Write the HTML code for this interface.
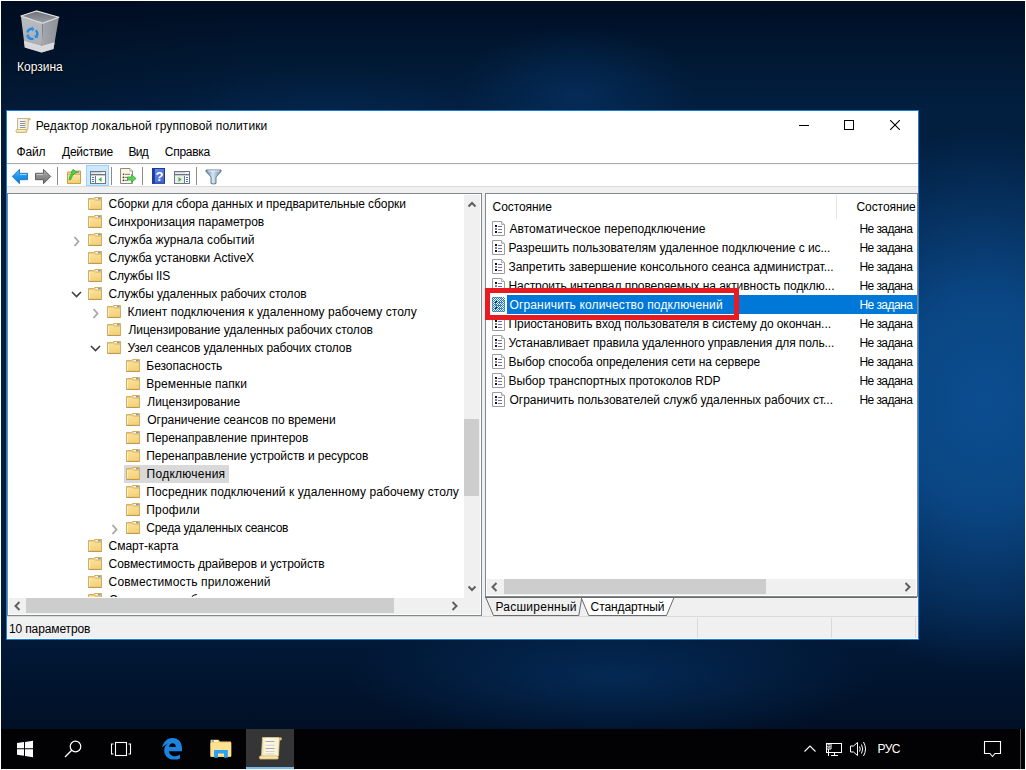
<!DOCTYPE html><html><head><meta charset="utf-8"><style>
html,body{margin:0;padding:0;}
body{width:1026px;height:770px;position:relative;overflow:hidden;background:#fff;font-family:"Liberation Sans", sans-serif;}
.t{position:absolute;white-space:nowrap;line-height:16px;font-family:"Liberation Sans", sans-serif;}
svg{position:absolute;}
</style></head><body>
<div style="position:absolute;left:1px;top:1px;width:1024px;height:768px;background:#011330;background:radial-gradient(ellipse 260px 200px at 0px 20px, rgba(0,10,28,0.4), rgba(0,10,28,0) 100%), radial-gradient(ellipse 120px 70px at 575px 95px, rgba(6,52,105,0.6), rgba(6,52,105,0) 100%), radial-gradient(ellipse 160px 45px at 330px 110px, rgba(5,45,92,0.4), rgba(5,45,92,0) 100%), radial-gradient(ellipse 260px 70px at 610px 675px, rgba(5,48,96,0.75), rgba(5,48,96,0) 100%), radial-gradient(ellipse 230px 270px at 985px 400px, rgba(12,80,148,0.95) 0%, rgba(12,80,148,0.8) 40%, rgba(12,80,148,0) 100%), linear-gradient(180deg,#000d24 0%, #011832 7%, #021f40 14%, #021d3e 40%, #021d3f 78%, #011530 88%, #010c1e 100%);"></div>
<svg style="left:18px;top:8px" width="44" height="48" viewBox="0 0 44 48">
<defs>
<linearGradient id="binl" x1="0" y1="0" x2="0" y2="1"><stop offset="0" stop-color="#b9bcc1"/><stop offset="1" stop-color="#a8acb1"/></linearGradient>
<linearGradient id="binr" x1="0" y1="0" x2="1" y2="0"><stop offset="0" stop-color="#a4a8ae"/><stop offset="1" stop-color="#8e9298"/></linearGradient>
<linearGradient id="bint" x1="0" y1="0" x2="0" y2="1"><stop offset="0" stop-color="#6e7278"/><stop offset="1" stop-color="#9a9ea4"/></linearGradient>
</defs>
<path d="M2.9 7.9 L24.6 15.3 L23.6 44.4 L6.8 39.5 Z" fill="url(#binl)"/>
<path d="M24.6 15.3 L40.9 9.3 L35.5 40.9 L23.6 44.4 Z" fill="url(#binr)"/>
<path d="M5.9 33.5 L23.8 38.5 L36.5 34.8 L35.5 40.9 L23.6 44.4 L6.8 39.5 Z" fill="#d6d8db"/>
<path d="M5.9 33.5 L23.8 38.5 L36.5 34.8" fill="none" stroke="#e8e9ea" stroke-width="0.8"/>
<path d="M2.9 7.9 L18.2 2.9 L40.9 9.3 L24.6 15.3 Z" fill="url(#bint)" stroke="#e4e6e8" stroke-width="1.1" stroke-linejoin="round"/>
<path d="M9.37 24.51 A5.0 5.0 0 0 1 14.20 20.80 M17.74 22.26 A5.0 5.0 0 0 1 18.53 28.30 M15.49 30.63 A5.0 5.0 0 0 1 9.87 28.30 " fill="none" stroke="#1f8ae8" stroke-width="2.4"/><path d="M14.20 18.20 L16.31 21.27 L14.20 23.40 Z" fill="#1f8ae8"/><path d="M20.78 29.60 L17.07 29.90 L16.28 27.00 Z" fill="#1f8ae8"/><path d="M7.62 29.60 L9.22 26.24 L12.12 27.00 Z" fill="#1f8ae8"/>
</svg>
<div class="t" style="left:17px;top:59px;color:#fff;font-size:12px;text-shadow:0 1px 2px #000,0 0 1px #000;">Корзина</div>
<div style="position:absolute;left:6px;top:110px;width:913px;height:530px;background:#ffffff;box-sizing:border-box;border:1px solid #1a7fd4;"></div>
<svg style="left:14px;top:116px" width="18" height="18" viewBox="0 0 18 18">
<defs><linearGradient id="scr" x1="0" x2="1"><stop offset="0" stop-color="#f6f1dc"/><stop offset="0.5" stop-color="#fdf7dc"/><stop offset="1" stop-color="#f3e2a8"/></linearGradient></defs>
<path d="M3.5 2.5 H14.5 L13.8 13.5 H3.5 Z" fill="url(#scr)" stroke="#bcb8a6" stroke-width="1"/>
<path d="M6 5.5 H11.5 M6 7.5 H11.5 M6 9.5 H11.5 M6 11.5 H11.5" stroke="#8a90b8" stroke-width="1"/>
<circle cx="15.2" cy="3.3" r="1.3" fill="#d8b65c"/>
<path d="M2.5 13.5 H12.5 Q13.3 15 12.5 16.5 H2.5 Q1.2 15 2.5 13.5 Z" fill="#f3dc98" stroke="#c9b478" stroke-width="0.9"/>
<path d="M3 14.6 H11" stroke="#fff6d8" stroke-width="0.8"/>
</svg>
<div class="t" style="left:35.7px;top:118px;color:#000;font-size:12px;letter-spacing:0.103px;">Редактор локальной групповой политики</div>
<div style="position:absolute;left:799px;top:125px;width:10px;height:1px;background:#000;"></div>
<div style="position:absolute;left:844px;top:120px;width:10px;height:10px;background:transparent;box-sizing:border-box;border:1px solid #000;"></div>
<svg style="left:890px;top:120px" width="10" height="10" viewBox="0 0 10 10"><path d="M0 0 L10 10 M10 0 L0 10" stroke="#000" stroke-width="1.1"/></svg>
<div class="t" style="left:16.5px;top:144px;color:#000;font-size:12px;letter-spacing:-0.167px;">Файл</div>
<div class="t" style="left:62.0px;top:144px;color:#000;font-size:12px;letter-spacing:-0.214px;">Действие</div>
<div class="t" style="left:128.5px;top:144px;color:#000;font-size:12px;letter-spacing:-0.75px;">Вид</div>
<div class="t" style="left:164.8px;top:144px;color:#000;font-size:12px;letter-spacing:-0.267px;">Справка</div>
<div style="position:absolute;left:7px;top:163px;width:911px;height:1px;background:#a9a9a9;"></div>
<div style="position:absolute;left:7px;top:164px;width:911px;height:1px;background:#f6f8fb;"></div>
<div style="position:absolute;left:7px;top:186px;width:911px;height:1px;background:#dadada;"></div>
<div style="position:absolute;left:7px;top:187px;width:911px;height:6px;background:#f0f0f0;"></div>
<div style="position:absolute;left:7px;top:193px;width:911px;height:445px;background:#f0f0f0;"></div>
<div style="position:absolute;left:86px;top:165px;width:23px;height:21px;background:#cce8ff;box-sizing:border-box;border:1px solid #99d1ff;"></div>
<svg style="left:0px;top:160px" width="240" height="30" viewBox="0 0 240 30">
<defs>
<linearGradient id="gb" x1="0" y1="0" x2="0" y2="1"><stop offset="0" stop-color="#5cc0f8"/><stop offset="0.5" stop-color="#1c96ec"/><stop offset="1" stop-color="#0a78d6"/></linearGradient>
<linearGradient id="gg" x1="0" y1="0" x2="0" y2="1"><stop offset="0" stop-color="#b4b4b4"/><stop offset="0.5" stop-color="#8c8c8c"/><stop offset="1" stop-color="#747474"/></linearGradient>
<linearGradient id="gf" x1="0" y1="0" x2="0" y2="1"><stop offset="0" stop-color="#fbe7a6"/><stop offset="1" stop-color="#f2cf6e"/></linearGradient>
<linearGradient id="gh" x1="0" y1="0" x2="1" y2="1"><stop offset="0" stop-color="#6d8fe8"/><stop offset="1" stop-color="#3c5fcc"/></linearGradient>
<linearGradient id="gfl" x1="0" y1="0" x2="1" y2="0"><stop offset="0" stop-color="#5a7894"/><stop offset="0.45" stop-color="#d8e8f4"/><stop offset="1" stop-color="#6c8aa6"/></linearGradient>
</defs>
<!-- back arrow -->
<path d="M12.3 16.5 L19.5 9.3 V13.3 H27.5 V19.7 H19.5 V23.7 Z" fill="url(#gb)" stroke="#2d7cc8" stroke-width="1" stroke-linejoin="round"/>
<path d="M20 14.5 H26.5" stroke="#8fd4ff" stroke-width="1"/>
<!-- forward arrow -->
<path d="M50.7 16.5 L43.5 9.3 V13.3 H35.5 V19.7 H43.5 V23.7 Z" fill="url(#gg)" stroke="#5e5e5e" stroke-width="1" stroke-linejoin="round"/>
<path d="M36.5 14.5 H43" stroke="#c8c8c8" stroke-width="1"/>
<!-- separators -->
<path d="M57.5 7 V25 M111.5 7 V25 M142.5 7 V25 M196.5 7 V25" stroke="#8c8c8c" stroke-width="1"/>
<!-- up folder -->
<path d="M67.5 12 H72 L73 11 H80.5 V23.5 H67.5 Z" fill="#f3d27a" stroke="#c8a048" stroke-width="1"/>
<path d="M68 14.5 H80" stroke="#d8b460" stroke-width="1"/>
<rect x="68" y="15" width="12" height="8" fill="url(#gf)"/>
<rect x="76" y="11.5" width="3" height="1.3" fill="#4a90e0"/>
<path d="M69 19.5 Q70 14 72.5 13 L71 12.5 L73.3 9.2 L76.5 12.8 L74.8 13 Q72.5 15 70.5 19.8 Z" fill="#4cd84c" stroke="#2aa02a" stroke-width="0.8"/>
<!-- show/hide tree icon -->
<rect x="90.5" y="11.5" width="15" height="12" fill="#f4f4f4" stroke="#6e7682" stroke-width="1"/>
<path d="M91 12.8 H101.5" stroke="#c8c8c8" stroke-width="1"/>
<rect x="102" y="12.2" width="1" height="1" fill="#fff"/><rect x="104" y="12.2" width="1" height="1" fill="#fff"/>
<path d="M91 14.5 H105" stroke="#6e7682" stroke-width="1"/>
<path d="M91 15.5 H105" stroke="#c8ccd2" stroke-width="1"/>
<path d="M95.5 16 V23" stroke="#6e7682" stroke-width="1"/>
<rect x="96" y="16" width="9" height="7" fill="#ffffff"/>
<path d="M92 17.5 H94 M92 19.5 H94 M92 21.5 H94" stroke="#3f7fd0" stroke-width="1.2"/>
<path d="M98.5 19.5 L101.5 17 V22 Z" fill="#35b535"/>
<!-- export list -->
<path d="M120.5 8.5 H130 L132.5 11 V23.5 H120.5 Z" fill="#fdf6dc" stroke="#8a8a8a" stroke-width="1"/>
<path d="M130 8.5 V11 H132.5" fill="#fff" stroke="#9a9a9a" stroke-width="0.8"/>
<circle cx="123.5" cy="14.3" r="0.8" fill="#222"/><circle cx="123.5" cy="17.4" r="0.8" fill="#222"/><circle cx="123.5" cy="20.4" r="0.8" fill="#222"/>
<path d="M125 14.3 H130 M125 17.4 H128 M125 20.4 H128" stroke="#7a70b0" stroke-width="1"/>
<path d="M127.5 17 H131.5 V14.5 L136 18.5 L131.5 22.5 V20 H127.5 Z" fill="#5cd05c" stroke="#34a834" stroke-width="0.8"/>
<!-- help book -->
<rect x="152" y="8" width="13" height="15.7" fill="url(#gh)"/>
<rect x="152" y="8" width="3" height="15.7" fill="#2040a8"/>
<rect x="152.5" y="8.5" width="12" height="14.7" fill="none" stroke="#1c3a9a" stroke-width="1"/>
<text x="159.5" y="21" font-family="Liberation Sans" font-size="13" font-weight="bold" fill="#fff" text-anchor="middle">?</text>
<!-- action pane icon -->
<rect x="174.5" y="11.5" width="15" height="12" fill="#f4f4f4" stroke="#6e7682" stroke-width="1"/>
<path d="M175 12.8 H185.5" stroke="#c8c8c8" stroke-width="1"/>
<rect x="186" y="12.2" width="1" height="1" fill="#fff"/><rect x="188" y="12.2" width="1" height="1" fill="#fff"/>
<path d="M175 14.5 H189" stroke="#6e7682" stroke-width="1"/>
<path d="M175 15.5 H189" stroke="#c8ccd2" stroke-width="1"/>
<path d="M184.5 16 V23" stroke="#6e7682" stroke-width="1"/>
<rect x="175" y="16" width="9" height="7" fill="#eeeeee"/>
<rect x="185" y="16" width="4" height="7" fill="#ffffff"/>
<path d="M186 17.5 H188 M186 19.5 H188 M186 21.5 H188" stroke="#3f7fd0" stroke-width="1.2"/>
<path d="M178.5 17 L181.5 19.5 L178.5 22 Z" fill="#35b535"/>
<!-- filter -->
<path d="M206 10 H221 V11.5 L216 17 V23.5 Q213.5 24.5 211 23.5 V17 L206 11.5 Z" fill="url(#gfl)" stroke="#58748e" stroke-width="0.9" stroke-linejoin="round"/>
<path d="M207.5 11 H219.5" stroke="#e8f2fa" stroke-width="1"/>
</svg>
<svg width="0" height="0" style="position:absolute;left:0;top:0"><defs>
<symbol id="fold" viewBox="0 0 14 13">
<linearGradient id="fg" x1="0" y1="0" x2="0.3" y2="1"><stop offset="0" stop-color="#fbe49e"/><stop offset="1" stop-color="#f4d27a"/></linearGradient>
<path d="M0.5 1.5 H5.5 L6.5 0.5 H13.5 V12.5 H0.5 Z" fill="#eccb7a" stroke="#d2ad64" stroke-width="1"/>
<rect x="7.5" y="1.2" width="2.5" height="1" fill="#ffffff"/><rect x="10" y="1.2" width="2.5" height="1" fill="#4a94e4"/>
<path d="M1 2 H6.3 L7.3 3.2 H13 V12 H1 Z" fill="url(#fg)"/>
<path d="M1 2.2 H6.3 L7.3 3.4 H13" stroke="#e2bd6c" stroke-width="0.8" fill="none"/>
<path d="M0.5 12.4 H13.5" stroke="#bf9850" stroke-width="1"/>
<path d="M1.5 3 V11.5" stroke="#fdf2c8" stroke-width="0.8"/>
</symbol>
<symbol id="doc" viewBox="0 0 13 15">
<path d="M0.5 0.5 H9.5 L12.5 3.5 V14.5 H0.5 Z" fill="#fff" stroke="#9c9c9c" stroke-width="1"/>
<path d="M9.5 0.5 V3.5 H12.5" fill="#e8e8e8" stroke="#b0b0b0" stroke-width="1"/>
<rect x="3" y="4" width="2" height="2" fill="#111"/>
<rect x="3" y="7" width="2" height="2" fill="#7c78b0"/>
<rect x="3" y="10" width="2" height="2" fill="#111"/>
<path d="M6 5.5 H10 M6 8.5 H10 M6 11.5 H10" stroke="#7670a8" stroke-width="1"/>
</symbol>
</defs></svg>
<div style="position:absolute;left:7px;top:193px;width:475px;height:423px;background:#ffffff;box-sizing:border-box;border:1px solid #828790;"></div>
<div style="position:absolute;left:8px;top:194px;width:456px;height:403px;overflow:hidden"><div style="position:absolute;left:-8px;top:-194px;width:1026px;height:770px"><svg style="left:88px;top:197px" width="14" height="13"><use href="#fold"/></svg>
<div class="t" style="left:108.6px;top:196px;color:#000;font-size:12px;letter-spacing:-0.064px;">Сборки для сбора данных и предварительные сборки</div>
<svg style="left:88px;top:215px" width="14" height="13"><use href="#fold"/></svg>
<div class="t" style="left:108.6px;top:214px;color:#000;font-size:12px;letter-spacing:-0.039px;">Синхронизация параметров</div>
<svg style="left:73px;top:236px" width="8" height="11" viewBox="0 0 8 11"><path d="M1.5 1 L5.5 5.5 L1.5 10" fill="none" stroke="#a6a6a6" stroke-width="1.8"/></svg>
<svg style="left:88px;top:233px" width="14" height="13"><use href="#fold"/></svg>
<div class="t" style="left:108.6px;top:232px;color:#000;font-size:12px;letter-spacing:0.052px;">Служба журнала событий</div>
<svg style="left:88px;top:251px" width="14" height="13"><use href="#fold"/></svg>
<div class="t" style="left:108.6px;top:250px;color:#000;font-size:12px;letter-spacing:-0.026px;">Служба установки ActiveX</div>
<svg style="left:88px;top:269px" width="14" height="13"><use href="#fold"/></svg>
<div class="t" style="left:108.6px;top:268px;color:#000;font-size:12px;letter-spacing:-0.2px;">Службы IIS</div>
<svg style="left:71px;top:290px" width="11" height="9" viewBox="0 0 11 9"><path d="M1 2 L5.5 6.5 L10 2" fill="none" stroke="#404040" stroke-width="1.6"/></svg>
<svg style="left:88px;top:287px" width="14" height="13"><use href="#fold"/></svg>
<div class="t" style="left:108.6px;top:286px;color:#000;font-size:12px;letter-spacing:-0.06px;">Службы удаленных рабочих столов</div>
<svg style="left:92px;top:308px" width="8" height="11" viewBox="0 0 8 11"><path d="M1.5 1 L5.5 5.5 L1.5 10" fill="none" stroke="#a6a6a6" stroke-width="1.8"/></svg>
<svg style="left:107px;top:305px" width="14" height="13"><use href="#fold"/></svg>
<div class="t" style="left:127.5px;top:304px;color:#000;font-size:12px;letter-spacing:0.044px;">Клиент подключения к удаленному рабочему столу</div>
<svg style="left:107px;top:323px" width="14" height="13"><use href="#fold"/></svg>
<div class="t" style="left:128.5px;top:322px;color:#000;font-size:12px;letter-spacing:-0.082px;">Лицензирование удаленных рабочих столов</div>
<svg style="left:90px;top:344px" width="11" height="9" viewBox="0 0 11 9"><path d="M1 2 L5.5 6.5 L10 2" fill="none" stroke="#404040" stroke-width="1.6"/></svg>
<svg style="left:107px;top:341px" width="14" height="13"><use href="#fold"/></svg>
<div class="t" style="left:127.5px;top:340px;color:#000;font-size:12px;letter-spacing:-0.117px;">Узел сеансов удаленных рабочих столов</div>
<svg style="left:126px;top:359px" width="14" height="13"><use href="#fold"/></svg>
<div class="t" style="left:146.3px;top:358px;color:#000;font-size:12px;letter-spacing:-0.045px;">Безопасность</div>
<svg style="left:126px;top:377px" width="14" height="13"><use href="#fold"/></svg>
<div class="t" style="left:146.3px;top:376px;color:#000;font-size:12px;letter-spacing:0.057px;">Временные папки</div>
<svg style="left:126px;top:395px" width="14" height="13"><use href="#fold"/></svg>
<div class="t" style="left:147.3px;top:394px;color:#000;font-size:12px;letter-spacing:-0.015px;">Лицензирование</div>
<svg style="left:126px;top:413px" width="14" height="13"><use href="#fold"/></svg>
<div class="t" style="left:147.3px;top:412px;color:#000;font-size:12px;letter-spacing:-0.045px;">Ограничение сеансов по времени</div>
<svg style="left:126px;top:431px" width="14" height="13"><use href="#fold"/></svg>
<div class="t" style="left:146.3px;top:430px;color:#000;font-size:12px;letter-spacing:-0.046px;">Перенаправление принтеров</div>
<svg style="left:126px;top:449px" width="14" height="13"><use href="#fold"/></svg>
<div class="t" style="left:146.3px;top:448px;color:#000;font-size:12px;letter-spacing:-0.074px;">Перенаправление устройств и ресурсов</div>
<div style="position:absolute;left:124px;top:465px;width:105px;height:18px;background:#d9d9d9;"></div>
<svg style="left:126px;top:467px" width="14" height="13"><use href="#fold"/></svg>
<div class="t" style="left:146.6px;top:466px;color:#000;font-size:12px;letter-spacing:0.26px;">Подключения</div>
<svg style="left:126px;top:485px" width="14" height="13"><use href="#fold"/></svg>
<div class="t" style="left:146.3px;top:484px;color:#000;font-size:12px;letter-spacing:0.098px;">Посредник подключений к удаленному рабочему столу</div>
<svg style="left:126px;top:503px" width="14" height="13"><use href="#fold"/></svg>
<div class="t" style="left:146.3px;top:502px;color:#000;font-size:12px;letter-spacing:0.2px;">Профили</div>
<svg style="left:111px;top:524px" width="8" height="11" viewBox="0 0 8 11"><path d="M1.5 1 L5.5 5.5 L1.5 10" fill="none" stroke="#a6a6a6" stroke-width="1.8"/></svg>
<svg style="left:126px;top:521px" width="14" height="13"><use href="#fold"/></svg>
<div class="t" style="left:146.3px;top:520px;color:#000;font-size:12px;letter-spacing:-0.268px;">Среда удаленных сеансов</div>
<svg style="left:88px;top:539px" width="14" height="13"><use href="#fold"/></svg>
<div class="t" style="left:108.6px;top:538px;color:#000;font-size:12px;letter-spacing:-0.02px;">Смарт-карта</div>
<svg style="left:88px;top:557px" width="14" height="13"><use href="#fold"/></svg>
<div class="t" style="left:108.6px;top:556px;color:#000;font-size:12px;letter-spacing:-0.088px;">Совместимость драйверов и устройств</div>
<svg style="left:88px;top:575px" width="14" height="13"><use href="#fold"/></svg>
<div class="t" style="left:108.6px;top:574px;color:#000;font-size:12px;letter-spacing:0.13px;">Совместимость приложений</div>
<svg style="left:88px;top:593px" width="14" height="13"><use href="#fold"/></svg>
<div class="t" style="left:109px;top:592px;color:#000;font-size:12px;">Содержимое облака</div></div></div>
<div style="position:absolute;left:464px;top:195px;width:16px;height:403px;background:#f0f0f0;"></div>
<div style="position:absolute;left:464px;top:419px;width:15px;height:77px;background:#cdcdcd;"></div>
<svg style="left:467px;top:200px" width="10" height="8" viewBox="0 0 10 8"><path d="M1.5 6.5 L5 3 L8.5 6.5" fill="none" stroke="#606060" stroke-width="2"/></svg>
<svg style="left:467px;top:585px" width="10" height="8" viewBox="0 0 10 8"><path d="M1.5 1.5 L5 5 L8.5 1.5" fill="none" stroke="#606060" stroke-width="2"/></svg>
<div style="position:absolute;left:9px;top:598px;width:471px;height:16px;background:#f0f0f0;"></div>
<div style="position:absolute;left:26px;top:598px;width:368px;height:15px;background:#cdcdcd;"></div>
<svg style="left:13px;top:601px" width="8" height="10" viewBox="0 0 8 10"><path d="M6.5 1 L2.5 5 L6.5 9" fill="none" stroke="#606060" stroke-width="2"/></svg>
<svg style="left:451px;top:601px" width="8" height="10" viewBox="0 0 8 10"><path d="M1.5 1 L5.5 5 L1.5 9" fill="none" stroke="#606060" stroke-width="2"/></svg>
<div style="position:absolute;left:485px;top:193px;width:433px;height:404px;background:#ffffff;box-sizing:border-box;border:1px solid #828790;"></div>
<div class="t" style="left:492.6px;top:199px;color:#000;font-size:12px;letter-spacing:-0.075px;">Состояние</div>
<div style="position:absolute;left:836px;top:195px;width:1px;height:24px;background:#e5e5e5;"></div>
<div style="position:absolute;left:486px;top:194px;width:431px;height:385px;overflow:hidden"><div style="position:absolute;left:-486px;top:-194px;width:1026px;height:770px"><div class="t" style="left:856.5px;top:199px;color:#000;font-size:12px;letter-spacing:-0.075px;">Состояние</div></div></div>
<svg style="left:492px;top:221px" width="13" height="15"><use href="#doc"/></svg>
<div class="t" style="left:509.5px;top:221px;color:#000;font-size:12px;letter-spacing:0.048px;">Автоматическое переподключение</div>
<div class="t" style="left:859.4px;top:221px;color:#000;font-size:12px;letter-spacing:-0.55px;">Не задана</div>
<svg style="left:492px;top:240px" width="13" height="15"><use href="#doc"/></svg>
<div class="t" style="left:508.5px;top:240px;color:#000;font-size:12px;letter-spacing:-0.044px;">Разрешить пользователям удаленное подключение с ис...</div>
<div class="t" style="left:859.4px;top:240px;color:#000;font-size:12px;letter-spacing:-0.55px;">Не задана</div>
<svg style="left:492px;top:259px" width="13" height="15"><use href="#doc"/></svg>
<div class="t" style="left:508.5px;top:259px;color:#000;font-size:12px;letter-spacing:-0.028px;">Запретить завершение консольного сеанса администрат...</div>
<div class="t" style="left:859.4px;top:259px;color:#000;font-size:12px;letter-spacing:-0.55px;">Не задана</div>
<svg style="left:492px;top:278px" width="13" height="15"><use href="#doc"/></svg>
<div class="t" style="left:508.5px;top:278px;color:#000;font-size:12px;letter-spacing:-0.055px;">Настроить интервал проверяемых на активность подклю...</div>
<div class="t" style="left:859.4px;top:278px;color:#000;font-size:12px;letter-spacing:-0.55px;">Не задана</div>
<div style="position:absolute;left:507px;top:295px;width:410px;height:19px;background:#0078d7;"></div>
<svg style="left:492px;top:297px" width="13" height="15"><use href="#doc"/></svg>
<div style="position:absolute;left:492px;top:297px;width:13px;height:15px;background:repeating-conic-gradient(#0078d7 0 25%, transparent 0 50%) 0 0/2px 2px;opacity:0.9"></div>
<div class="t" style="left:509.5px;top:297px;color:#fff;font-size:12px;letter-spacing:0.141px;">Ограничить количество подключений</div>
<div class="t" style="left:859.4px;top:297px;color:#fff;font-size:12px;letter-spacing:-0.55px;">Не задана</div>
<svg style="left:492px;top:316px" width="13" height="15"><use href="#doc"/></svg>
<div class="t" style="left:508.5px;top:316px;color:#000;font-size:12px;letter-spacing:-0.076px;">Приостановить вход пользователя в систему до окончан...</div>
<div class="t" style="left:859.4px;top:316px;color:#000;font-size:12px;letter-spacing:-0.55px;">Не задана</div>
<svg style="left:492px;top:335px" width="13" height="15"><use href="#doc"/></svg>
<div class="t" style="left:508.5px;top:335px;color:#000;font-size:12px;letter-spacing:-0.109px;">Устанавливает правила удаленного управления для поль...</div>
<div class="t" style="left:859.4px;top:335px;color:#000;font-size:12px;letter-spacing:-0.55px;">Не задана</div>
<svg style="left:492px;top:354px" width="13" height="15"><use href="#doc"/></svg>
<div class="t" style="left:508.5px;top:354px;color:#000;font-size:12px;letter-spacing:-0.088px;">Выбор способа определения сети на сервере</div>
<div class="t" style="left:859.4px;top:354px;color:#000;font-size:12px;letter-spacing:-0.55px;">Не задана</div>
<svg style="left:492px;top:373px" width="13" height="15"><use href="#doc"/></svg>
<div class="t" style="left:508.5px;top:373px;color:#000;font-size:12px;letter-spacing:-0.047px;">Выбор транспортных протоколов RDP</div>
<div class="t" style="left:859.4px;top:373px;color:#000;font-size:12px;letter-spacing:-0.55px;">Не задана</div>
<svg style="left:492px;top:392px" width="13" height="15"><use href="#doc"/></svg>
<div class="t" style="left:509.5px;top:392px;color:#000;font-size:12px;letter-spacing:-0.036px;">Ограничить пользователей служб удаленных рабочих ст...</div>
<div class="t" style="left:859.4px;top:392px;color:#000;font-size:12px;letter-spacing:-0.55px;">Не задана</div>
<div style="position:absolute;left:485px;top:288px;width:254px;height:32px;background:transparent;box-sizing:border-box;border:5px solid #e81b23;"></div>
<div style="position:absolute;left:487px;top:579px;width:429px;height:16px;background:#f0f0f0;"></div>
<div style="position:absolute;left:504px;top:579px;width:262px;height:15px;background:#cdcdcd;"></div>
<svg style="left:490px;top:582px" width="8" height="10" viewBox="0 0 8 10"><path d="M6.5 1 L2.5 5 L6.5 9" fill="none" stroke="#606060" stroke-width="2"/></svg>
<svg style="left:904px;top:582px" width="8" height="10" viewBox="0 0 8 10"><path d="M1.5 1 L5.5 5 L1.5 9" fill="none" stroke="#606060" stroke-width="2"/></svg>
<svg style="left:485px;top:597px" width="432" height="20" viewBox="0 0 432 20"><path d="M0.8 0.5 L8.5 18.5 H93.8 L96.8 0.5" fill="#f0f0f0" stroke="#6a6a6a" stroke-width="1"/><path d="M96.1 0.5 L103.7 18.5 H181.5 L189 0.5" fill="#ffffff" stroke="#6a6a6a" stroke-width="1"/><path d="M0 0.5 H432" stroke="#6a6a6a" stroke-width="1"/></svg>
<div class="t" style="left:495.4px;top:599px;color:#000;font-size:12px;letter-spacing:0.26px;">Расширенный</div>
<div class="t" style="left:590.6px;top:599px;color:#000;font-size:12px;letter-spacing:-0.1px;">Стандартный</div>
<div style="position:absolute;left:7px;top:616px;width:911px;height:1px;background:#dadada;"></div>
<div class="t" style="left:8.9px;top:621px;color:#000;font-size:12px;letter-spacing:-0.117px;">10 параметров</div>
<div style="position:absolute;left:697px;top:618px;width:1px;height:20px;background:#d9d9d9;"></div>
<div style="position:absolute;left:831px;top:618px;width:1px;height:20px;background:#d9d9d9;"></div>
<div style="position:absolute;left:915px;top:618px;width:1px;height:20px;background:#d9d9d9;"></div>
<div style="position:absolute;left:1px;top:729px;width:1024px;height:40px;background:#020204;"></div>
<div style="position:absolute;left:246px;top:729px;width:48px;height:40px;background:#353535;"></div>
<div style="position:absolute;left:246px;top:767px;width:48px;height:2px;background:#76b9ed;"></div>
<svg style="left:0px;top:729px" width="1026" height="40" viewBox="0 0 1026 40">
<!-- windows logo -->
<path d="M17 14 L24 13 V19.3 H17 Z M25 12.9 L33 11.7 V19.3 H25 Z M17 20.3 H24 V26.8 L17 25.8 Z M25 20.3 H33 V28.2 L25 27 Z" fill="#ffffff"/>
<!-- search -->
<circle cx="75.5" cy="17.5" r="5.3" fill="none" stroke="#fff" stroke-width="1.2"/>
<path d="M71.7 21.3 L65 28" stroke="#fff" stroke-width="1.3"/>
<!-- task view -->
<rect x="115.5" y="13.5" width="11" height="13" fill="none" stroke="#fff" stroke-width="1.1"/>
<path d="M113.5 15 H111.5 V25 H113.5 M128.5 15 H130.5 V25 H128.5" fill="none" stroke="#fff" stroke-width="1.1"/>
<!-- edge -->
<path fill-rule="evenodd" d="M162 18.6 C163.6 12.8 167 9.2 172.2 9 C178.2 8.8 182 13 182 19.5 V22.2 H169 C169.3 25.4 172 27.2 175 27.2 C177 27.2 178.7 26.6 180 25.5 V29.4 C178.5 30.2 176.5 30.6 174 30.6 C168 30.6 164.2 26.5 164.2 21.5 C164.2 17.8 166.3 15 169.1 14.2 C166.6 14.9 163.8 16.4 162 18.6 Z M169 18 H175.8 C175.8 15.8 174.5 14.3 172.5 14.3 C170.8 14.3 169.4 15.8 169 18 Z" fill="#1a84e0"/>
<!-- explorer -->
<path d="M210.5 11.5 Q210.5 10.7 211.3 10.7 H218.5 L220 12.5 H230.5 Q231.2 12.5 231.2 13.3 V27 Q231.2 27.8 230.5 27.8 H211.3 Q210.5 27.8 210.5 27 Z" fill="#f4cf6a"/>
<rect x="210.5" y="13.8" width="20.7" height="14" rx="0.8" fill="#fde293"/>
<rect x="211.8" y="11.4" width="2.2" height="1.3" fill="#3fa8f0"/><rect x="214" y="11.4" width="3.8" height="1.3" fill="#ffffff"/>
<path d="M214.1 28.8 V21 H227.8 V28.8 H224 V24.5 H218 V28.8 Z" fill="#2aa2f0"/>
<!-- gpedit scroll big -->
<defs><linearGradient id="tsc" x1="0" x2="1"><stop offset="0" stop-color="#efe3b0"/><stop offset="0.25" stop-color="#fdf8e0"/><stop offset="1" stop-color="#f8f0cc"/></linearGradient></defs>
<path d="M262.5 8.5 H279 Q280.5 9.5 279.3 11 L278.5 27 H261.5 Z" fill="url(#tsc)" stroke="#d6c890" stroke-width="0.8"/>
<path d="M265.5 12.5 H274.5 M265.5 19.5 H274.5" stroke="#a8a4c8" stroke-width="1"/>
<path d="M265.5 16.3 H274.5 M265.5 22.5 H274.5 M265.5 25 H274" stroke="#cfcfd8" stroke-width="1"/>
<path d="M260 27 H277.5 Q278.8 28.5 277.8 30 H260 Q258.8 28.5 260 27 Z" fill="#f5e6a8" stroke="#d9c27a" stroke-width="0.8"/>
<circle cx="280.3" cy="9.8" r="1.6" fill="#dcc070"/>
<!-- tray chevron -->
<path d="M804.5 22.5 L810 17 L815.5 22.5" fill="none" stroke="#fff" stroke-width="1.1"/>
<!-- network -->
<rect x="826.5" y="14.5" width="15" height="9" fill="none" stroke="#fff" stroke-width="1"/>
<path d="M831 14.5 V20 H826.5 M828.5 20 V27 M834.5 23.5 V26.5 M831 26.5 H838 M827.5 15.8 H830 M827.8 17 V18.2 H829.8 V17" fill="none" stroke="#fff" stroke-width="1"/>
<!-- volume -->
<path d="M850.5 17 H853.5 L857.5 13.5 V26.5 L853.5 23 H850.5 Z" fill="none" stroke="#fff" stroke-width="1"/>
<path d="M859.5 17.5 Q861 20 859.5 22.5 M861.5 15.5 Q864 20 861.5 24.5 M863.5 13 Q867.5 20 863.5 27" fill="none" stroke="#fff" stroke-width="1"/>
<!-- notification -->
<path d="M984.5 12.5 H1000.5 V24.5 H995 L992.5 27.5 L990 24.5 H984.5 Z" fill="none" stroke="#fff" stroke-width="1.1"/>
<path d="M1020.5 0 V40" stroke="#5a5a5a" stroke-width="1"/>
</svg>
<div class="t" style="left:877.5px;top:740.5px;color:#fff;font-size:12px;letter-spacing:-0.6px;">РУС</div>
</body></html>
